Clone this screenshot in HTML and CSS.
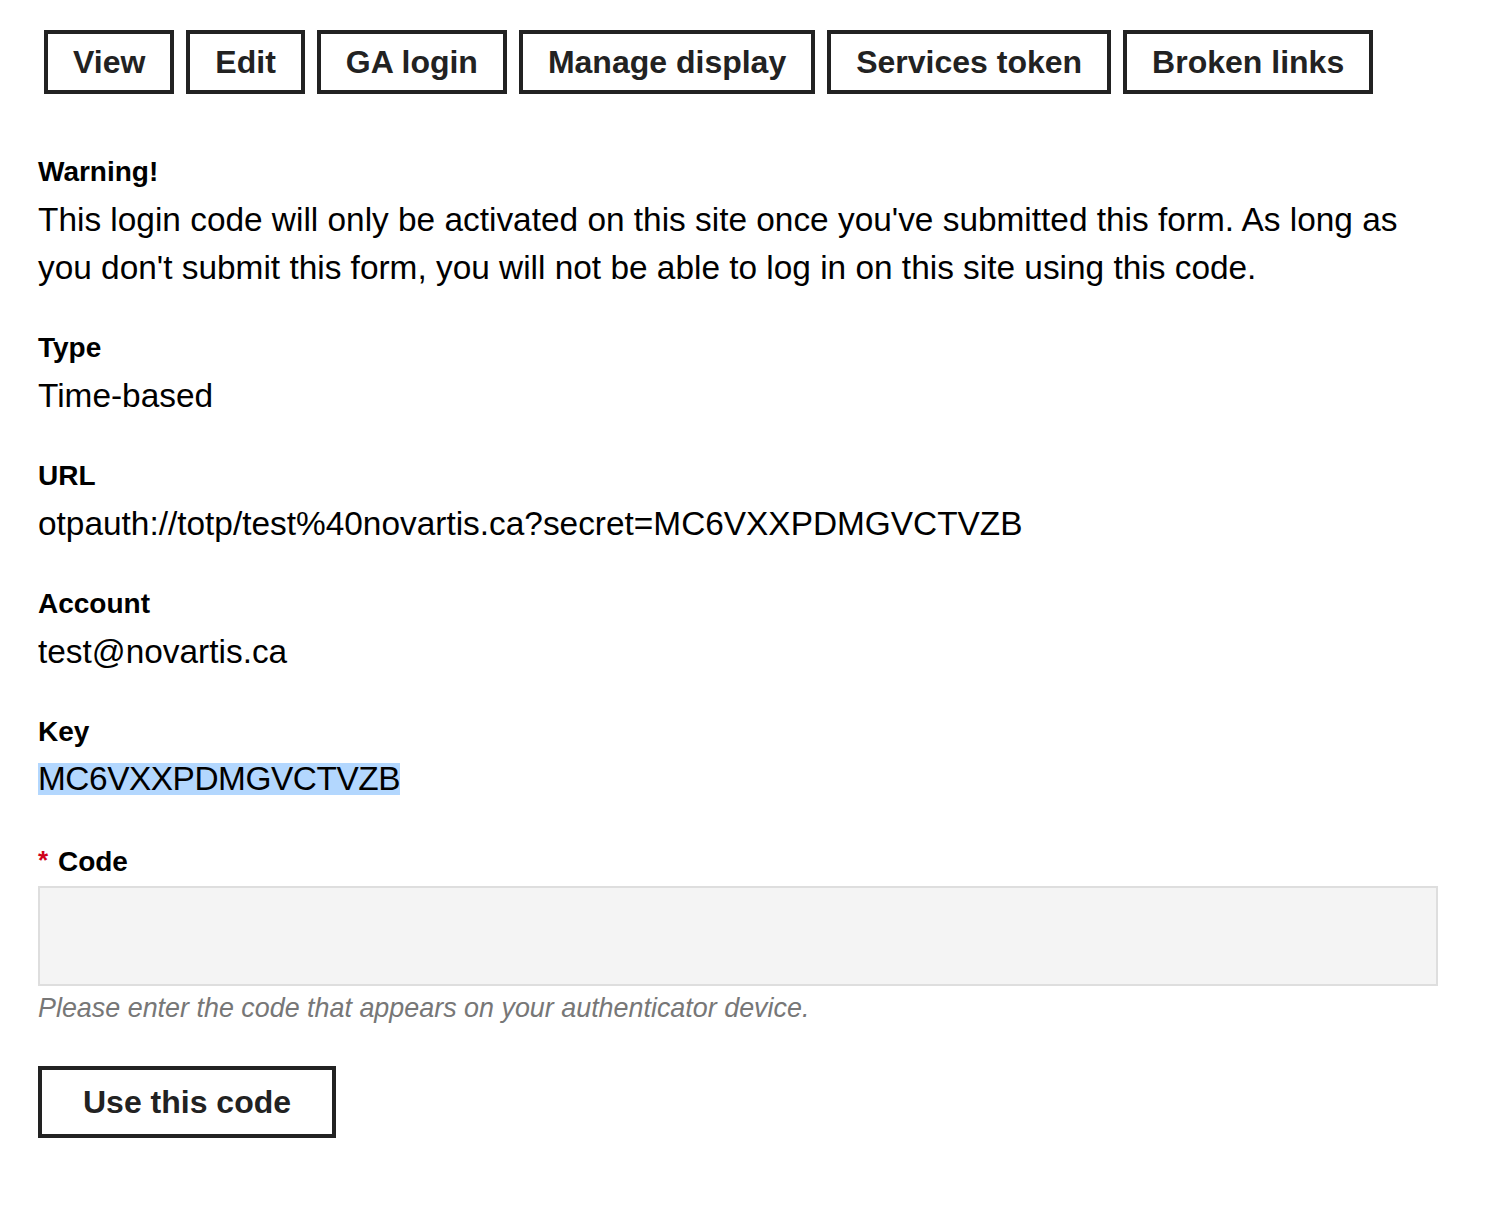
FILE: index.html
```html
<!DOCTYPE html>
<html lang="en">
<head>
<meta charset="utf-8">
<title>GA login</title>
<link rel="stylesheet" href="styles.css">
</head>
<body>
<nav class="tabs">
  <a class="tab" href="#">View</a>
  <a class="tab" href="#">Edit</a>
  <a class="tab" href="#">GA login</a>
  <a class="tab" href="#">Manage display</a>
  <a class="tab" href="#">Services token</a>
  <a class="tab" href="#">Broken links</a>
</nav>
<form class="form">
  <div class="item">
    <div class="label">Warning!</div>
    <div class="value">This login code will only be activated on this site once you've submitted this form. As long as you don't submit this form, you will not be able to log in on this site using this code.</div>
  </div>
  <div class="item">
    <div class="label">Type</div>
    <div class="value">Time-based</div>
  </div>
  <div class="item">
    <div class="label">URL</div>
    <div class="value">otpauth://totp/test%40novartis.ca?secret=MC6VXXPDMGVCTVZB</div>
  </div>
  <div class="item">
    <div class="label">Account</div>
    <div class="value">test@novartis.ca</div>
  </div>
  <div class="item">
    <div class="label">Key</div>
    <div class="value"><span class="selected">MC6VXXPDMGVCTVZB</span></div>
  </div>
  <div class="field">
    <label class="label field-label" for="code"><span class="req">*</span> Code</label>
    <input class="input" id="code" type="text">
    <div class="desc">Please enter the code that appears on your authenticator device.</div>
  </div>
  <button class="button" type="button">Use this code</button>
</form>
</body>
</html>
```
FILE: styles.css
```css
html, body {
  margin: 0;
  padding: 0;
  background: #fff;
}
body {
  font-family: "Liberation Sans", Arial, Helvetica, sans-serif;
  color: #000;
  padding: 30px 38px 0 38px;
}
.tabs {
  display: flex;
  gap: 12px;
  margin-left: 6px;
}
.tab {
  display: block;
  border: 4px solid #222;
  padding: 10px 25px;
  height: 36px;
  line-height: 36px;
  font-size: 32px;
  font-weight: bold;
  color: #222;
  text-decoration: none;
}
.form {
  margin-top: 54px;
  width: 1400px;
}
.item {
  margin-bottom: 32px;
}
.label {
  display: block;
  font-size: 28px;
  font-weight: bold;
  line-height: 48px;
  height: 48px;
}
.value {
  font-size: 33.4px;
  line-height: 48px;
}
.selected {
  display: inline-block;
  background: #b3d7fe;
  line-height: 32px;
  height: 32px;
  vertical-align: 1px;
  letter-spacing: -0.45px;
}
.field-label {
  margin-bottom: 2px;
}
.req {
  color: #d0021b;
  font-size: 26px;
  vertical-align: 2px;
  margin-right: 2px;
}
.input {
  display: block;
  box-sizing: border-box;
  width: 1400px;
  height: 100px;
  margin: 0;
  border: 2px solid #dedede;
  background: #f4f4f4;
  font-size: 32px;
  padding: 0 16px;
  outline: none;
}
.desc {
  font-size: 26.9px;
  font-style: italic;
  color: #777;
  line-height: 44px;
  margin-bottom: 36px;
}
.button {
  display: block;
  box-sizing: border-box;
  width: 298px;
  height: 72px;
  border: 4px solid #222;
  background: #fff;
  color: #222;
  font-family: "Liberation Sans", Arial, Helvetica, sans-serif;
  font-size: 32px;
  font-weight: bold;
  padding: 0;
  margin: 0;
}
```
